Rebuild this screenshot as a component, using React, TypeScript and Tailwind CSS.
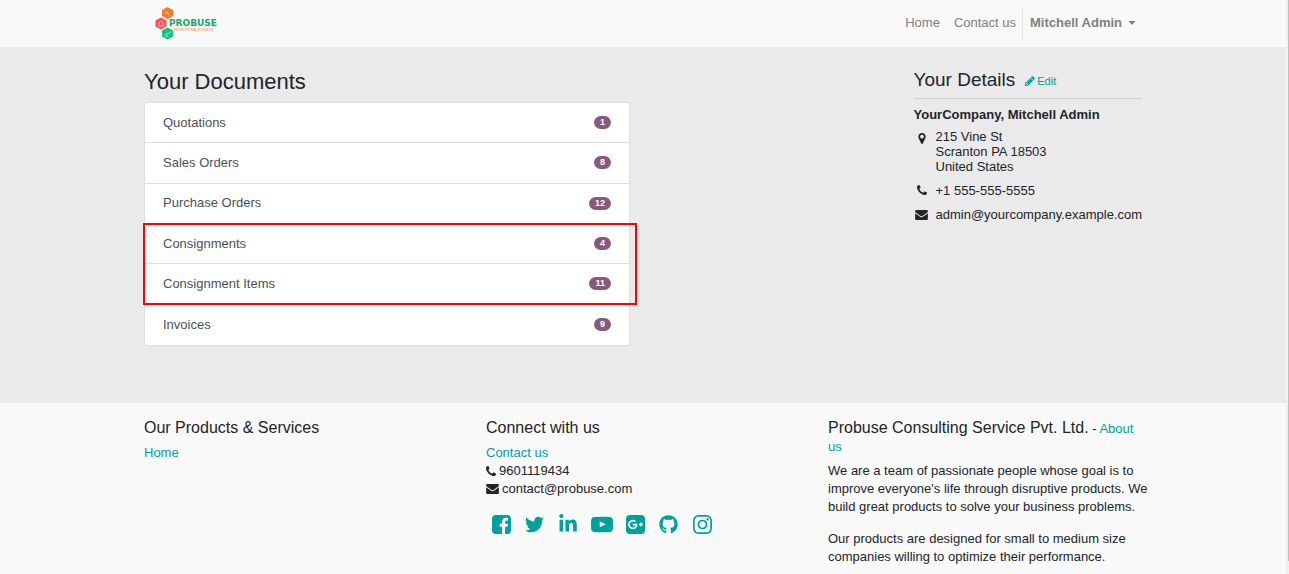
import type { ReactNode } from "react";
import { FaGithub, FaLinkedinIn, FaTwitter } from "react-icons/fa";

const documents = [
  { name: "Quotations", count: 1 },
  { name: "Sales Orders", count: 8 },
  { name: "Purchase Orders", count: 12 },
  { name: "Consignments", count: 4 },
  { name: "Consignment Items", count: 11 },
  { name: "Invoices", count: 9 },
];

function PencilIcon({ className }: { className?: string }) {
  return (
    <svg viewBox="128 128 1536 1536" fill="currentColor" className={className} aria-hidden="true">
      <path d="M491 1536l91-91-235-235-91 91v107h128v128h107zm523-928q0-22-22-22-10 0-17 7l-542 542q-7 7-7 17 0 22 22 22 10 0 17-7l542-542q7-7 7-17zm-54-192l416 416-832 832h-416v-416zm683 96q0 53-37 90l-166 166-416-416 166-165q36-38 90-38 53 0 91 38l235 234q37 39 37 91z" />
    </svg>
  );
}

function PhoneIcon({ className }: { className?: string }) {
  return (
    <svg viewBox="0 0 1408 1408" fill="currentColor" className={className} aria-hidden="true">
      <path d="M1408 1112q0 27-10 70.5t-21 68.5q-21 50-122 106-94 51-186 51-27 0-52.5-3.5t-57.5-12.5-47.5-14.5-55.5-20.5-49-18q-98-35-175-83-128-79-264.5-215.5t-215.5-264.5q-48-77-83-175-3-9-18-49t-20.5-55.5-14.5-47.5-12.5-57.5-3.5-52.5q0-92 51-186 56-101 106-122 25-11 68.5-21t70.5-10q14 0 21 3 18 6 53 76 11 19 30 54t35 63.5 31 53.5q3 4 17.5 25t21.5 35.5 7 28.5q0 20-28.5 50t-62 55-62 53-28.5 46q0 9 5 22.5t8.5 20.5 14 24 11.5 19q76 137 174 235t235 174q2 1 19 11.5t24 14 20.5 8.500 22.500 5q18 0 46-28.5t53-62 55-62 50-28.5q14 0 28.5 7t35.5 21.5 25 17.5q25 15 53.5 31t63.5 35 54 30q70 35 76 53 3 7 3 21z" />
    </svg>
  );
}

function EnvelopeIcon({ className }: { className?: string }) {
  return (
    <svg viewBox="0 256 1792 1408" fill="currentColor" className={className} aria-hidden="true">
      <path d="M1792 710v794q0 66-47 113t-113 47h-1472q-66 0-113-47t-47-113v-794q44 49 101 87 362 246 497 345 57 42 92.5 65.5t94.5 48 110 24.5h2q51 0 110-24.5t94.5-48 92.5-65.5q170-123 498-345 57-39 100-87zm0-294q0 79-49 151t-122 123q-376 261-468 325-10 7-42.5 31t-54 38.5-52 32.5-57.5 27-50 9h-2q-23 0-50-9t-57.5-27-52-32.5-54-38.5-42.5-31q-91-64-262-182.5t-205-142.5q-62-42-117-115.5t-55-136.5q0-78 41.5-130t118.5-52h1472q65 0 112.5 47t47.5 113z" />
    </svg>
  );
}

function MarkerIcon({ className }: { className?: string }) {
  return (
    <svg viewBox="0 128 1024 1536" fill="currentColor" className={className} aria-hidden="true">
      <path d="M768 640q0-106-75-181t-181-75-181 75-75 181 75 181 181 75 181-75 75-181zm256 0q0 109-33 179l-364 774q-16 33-47.5 52t-67.5 19-67.5-19-46.5-52l-365-774q-33-70-33-179 0-212 150-362t362-150 362 150 150 362z" />
    </svg>
  );
}

function FacebookIcon() {
  return (
    <svg viewBox="128 128 1536 1536" fill="currentColor" className="size-[19px]" aria-hidden="true">
      <path d="M1376 128q119 0 203.5 84.5t84.5 203.5v960q0 119-84.5 203.5t-203.5 84.5h-188v-595h199l30-232h-229v-148q0-56 23.5-84t91.5-28l122-1v-207q-63-9-178-9-136 0-217.5 80t-81.5 226v171h-200v232h200v595h-532q-119 0-203.5-84.5t-84.5-203.5v-960q0-119 84.5-203.5t203.5-84.5h960z" />
    </svg>
  );
}

function YoutubeIcon() {
  return (
    <svg viewBox="0 128 1792 1536" fill="currentColor" className="h-[19px] w-[22px]" aria-hidden="true">
      <path d="M711 1128l484-250-484-253v503zm185-862q168 0 324.5 4.5t229.5 9.5l73 4q1 0 17 1.5t23 3 23.5 4.5 28.5 8 28 13 31 19.5 29 26.5q6 6 15.5 18.5t29 58.5 26.5 101q8 64 12.5 136.5t5.5 113.5v176q1 145-18 290-7 55-25 99.5t-32 61.5l-14 17q-14 15-29 26.5t-31 19-28 12.5-28.5 8-24 4.5-23 3-16.5 1.5q-251 19-627 19-207-2-359.5-6.5t-200.5-7.5l-49-4-36-4q-36-5-54.5-10t-51-21-56.5-41q-6-6-15.5-18.5t-29-58.5-26.5-101q-8-64-12.5-136.5t-5.5-113.5v-176q-1-145 18-290 7-55 25-99.5t32-61.5l14-17q14-15 29-26.5t31-19.5 28-13 28.5-8 23.5-4.5 23-3 17-1.5q251-18 627-18z" />
    </svg>
  );
}

function GooglePlusIcon() {
  return (
    <svg viewBox="128 128 1536 1536" fill="currentColor" className="size-[19px]" aria-hidden="true">
      <path d="M1045 905q0-26-6-64h-362v132h217q-3 24-16.5 50t-37.5 53-66.5 44.5-96.5 17.5q-99 0-169-71t-70-171 70-171 169-71q92 0 153 59l104-101q-108-100-257-100-160 0-272 112.5t-112 271.5 112 271.5 272 112.5q165 0 266.5-105t101.5-270zm345 46h109v-110h-109v-110h-110v110h-110v110h110v110h110v-110zm274-535v960q0 119-84.5 203.5t-203.5 84.5h-960q-119 0-203.5-84.5t-84.5-203.5v-960q0-119 84.5-203.5t203.5-84.5h960q119 0 203.5 84.5t84.5 203.5z" />
    </svg>
  );
}

function InstagramIcon() {
  return (
    <svg viewBox="128 128 1536 1536" fill="currentColor" className="size-[19px]" aria-hidden="true">
      <path d="M1152 896q0-106-75-181t-181-75-181 75-75 181 75 181 181 75 181-75 75-181zm138 0q0 164-115 279t-279 115-279-115-115-279 115-279 279-115 279 115 115 279zm108-410q0 38-27 65t-65 27-65-27-27-65 27-65 65-27 65 27 27 65zm-502-220q-7 0-76.5-.5t-105.5 0-96.5 3-103 10-71.5 18.5q-50 20-88 58t-58 88q-11 29-18.5 71.5t-10 103-3 96.5 0 105.5.5 76.5-.5 76.5 0 105.5 3 96.5 10 103 18.5 71.5q20 50 58 88t88 58q29 11 71.5 18.5t103 10 96.5 3 105.5 0 76.5-.5 76.5.5 105.5 0 96.5-3 103-10 71.5-18.5q50-20 88-58t58-88q11-29 18.5-71.5t10-103 3-96.5 0-105.5-.5-76.5.5-76.5 0-105.5-3-96.5-10-103-18.5-71.5q-20-50-58-88t-88-58q-29-11-71.5-18.5t-103-10-96.5-3-105.5 0-76.5.5zm768 630q0 229-5 317-10 208-124 322t-322 124q-88 5-317 5t-317-5q-208-10-322-124t-124-322q-5-88-5-317t5-317q10-208 124-322t322-124q88-5 317-5t317 5q208 10 322 124t124 322q5 88 5 317z" />
    </svg>
  );
}

function Logo() {
  return (
    <svg viewBox="0 0 64 36" className="h-9 w-16" role="img" aria-label="Probuse Professional Business">
      <path d="M15 17h48v4H15z" fill="#ededed" />
      <path d="M12.500 1l5.500 3v6l-5.500 3-5.500-3V4z" fill="#f47b2e" />
      <path d="M6 11.500l5.500 3v6L6 23.500l-5.500-3v-6z" fill="#f2545b" />
      <path d="M12.500 21.500l5.500 3v6l-5.500 3-5.500-3v-6z" fill="#17c37b" />
      <path d="M10.500 5l3.500 3M13 8l1.500 1.500M10 7h2" stroke="#ffc18f" fill="none" />
      <path d="M4 19.500v-3l2-1.500 2 1.500v3M3 20h6" stroke="#ffb0b0" fill="none" />
      <path d="M9.500 29.500l2-2 1.500 1 3-3M10.500 30.500h2" stroke="#c5f5df" fill="none" />
      <text x="14" y="20" fontSize="9" fontWeight="700" fontFamily="DejaVu Sans, sans-serif" fill="#14a870">PROBUSE</text>
      <text x="19" y="25" fontSize="3" fontFamily="Liberation Sans, sans-serif" fill="#f5893f">PROFESSIONAL BUSINESS</text>
    </svg>
  );
}

function Social({ label, children }: { label: string; children: ReactNode }) {
  return (
    <a href="#" aria-label={label} className="flex w-[22px] justify-center">
      {children}
    </a>
  );
}

export default function App() {
  return (
    <div className="flex min-h-screen bg-[#f9f9f9] font-['Liberation_Sans',sans-serif] text-[13px] leading-[18px] text-[#212529]">
      <div className="flex min-w-0 flex-1 flex-col">
        <header className="bg-[#f9f9f9]">
          <div className="mx-auto flex h-[47px] w-full max-w-[1026px] items-center justify-between pr-5 pl-[25px]">
            <a href="#"><Logo /></a>
            <nav className="-mt-0.5 flex items-center text-[#808080]">
              <a href="#" className="pr-[14px]">Home</a>
              <a href="#" className="flex h-8 items-center border-r border-[#e3e3e3] pr-[6px]">Contact us</a>
              <button type="button" className="flex items-center gap-[6px] pl-[7px] font-bold">
                Mitchell Admin
                <svg viewBox="0 0 8 4" className="h-1 w-2" fill="currentColor" aria-hidden="true"><path d="M0.500 0h7L4 4z" /></svg>
              </button>
            </nav>
          </div>
        </header>

        <main className="bg-[#eaeaea]">
          <div className="mx-auto grid w-full max-w-[1026px] grid-cols-4 pb-[57px]">
            <section className="col-span-2 pt-[22px] pr-[13px] pl-[14px]">
              <h1 className="mb-[7px] text-[22px] leading-[26px]">Your Documents</h1>
              <div className="relative">
                <div className="grid min-h-[244px] auto-rows-fr divide-y divide-[#dedede] overflow-hidden rounded-[3px] border border-[#dedede] bg-white">
                  {documents.map((doc) => (
                    <a key={doc.name} href="#" className="flex items-center justify-between px-[18px] text-[#495057]">
                      {doc.name}
                      <span className="rounded-full bg-[#875a7b] px-1.5 text-[9px] leading-[13px] font-bold text-white">{doc.count}</span>
                    </a>
                  ))}
                </div>
                <div className="pointer-events-none absolute top-[121px] -right-[7px] -left-px h-[82px] border-2 border-[#f00]" />
              </div>
            </section>

            <section className="col-start-4 px-[14px] pt-[20px]">
              <div className="flex items-center gap-[10px] border-b border-[#cfcfcf] pb-[5px]">
                <h2 className="text-[19px] leading-[26px]">Your Details</h2>
                <a href="#" className="mt-[2px] flex items-center gap-[2px] text-[11px] text-[#00a09d]">
                  <PencilIcon className="size-[10px]" />
                  Edit
                </a>
              </div>
              <address className="leading-[15px] not-italic">
                <p className="mt-2 mb-[7px] font-bold">YourCompany, Mitchell Admin</p>
                <div className="grid grid-cols-[16px_1fr] gap-x-[6px] gap-y-[9px] whitespace-nowrap">
                  <MarkerIcon className="mt-1 h-[11px] w-[8px] justify-self-center" />
                  <p>215 Vine St<br />Scranton PA 18503<br />United States</p>
                  <PhoneIcon className="mt-[2px] size-[10px] justify-self-center" />
                  <p>+1 555-555-5555</p>
                  <EnvelopeIcon className="mt-[3px] h-[10px] w-[13px] justify-self-center" />
                  <p>admin@yourcompany.example.com</p>
                </div>
              </address>
            </section>
          </div>
        </main>

        <footer className="mx-auto grid w-full max-w-[1026px] grid-cols-3 pt-[16px]">
          <section className="px-[14px]">
            <h3 className="mb-[7px] text-[16px] leading-[18px]">Our Products &amp; Services</h3>
            <a href="#" className="text-[#00a09d]">Home</a>
          </section>
          <section className="px-[14px]">
            <h3 className="mb-[7px] text-[16px] leading-[18px]">Connect with us</h3>
            <ul>
              <li><a href="#" className="text-[#00a09d]">Contact us</a></li>
              <li className="flex items-center gap-[3px]"><PhoneIcon className="size-[10px]" />9601119434</li>
              <li className="flex items-center gap-[3px]"><EnvelopeIcon className="h-[10px] w-[13px]" />contact@probuse.com</li>
            </ul>
            <div className="mt-4 ml-1 flex w-[223px] items-center justify-between text-[#00a09d]">
              <Social label="Facebook"><FacebookIcon /></Social>
              <Social label="Twitter"><FaTwitter className="size-[19px]" /></Social>
              <Social label="LinkedIn"><FaLinkedinIn className="size-[20px]" /></Social>
              <Social label="YouTube"><YoutubeIcon /></Social>
              <Social label="Google Plus"><GooglePlusIcon /></Social>
              <Social label="GitHub"><FaGithub className="size-[19px]" /></Social>
              <Social label="Instagram"><InstagramIcon /></Social>
            </div>
          </section>
          <section className="pl-[14px]">
            <div className="mb-[6px] pr-[14px]">
              <h3 className="inline text-[16px] leading-[18px]">Probuse Consulting Service Pvt. Ltd.</h3>
              {" - "}
              <a href="#" className="text-[#00a09d]">About us</a>
            </div>
            <p className="mb-[14px]">We are a team of passionate people whose goal is to improve everyone's life through disruptive products. We build great products to solve your business problems.</p>
            <p>Our products are designed for small to medium size companies willing to optimize their performance.</p>
          </section>
        </footer>
      </div>
      <div className="flex w-[3px] justify-end bg-[#f1f1f1] pb-[13px]" aria-hidden="true">
        <div className="w-px bg-[#c1c1c1]" />
      </div>
    </div>
  );
}
